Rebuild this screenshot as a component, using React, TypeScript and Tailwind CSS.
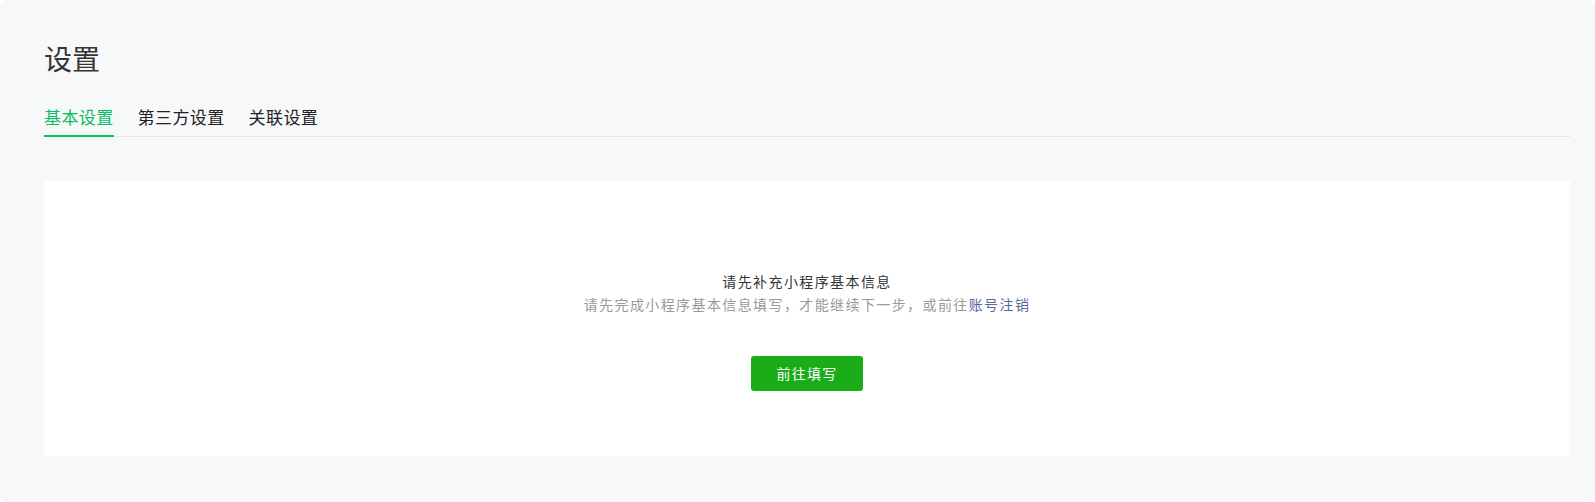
const tabs = ["基本设置", "第三方设置", "关联设置"]

const font = "font-['PingFang_SC','Noto_Sans_CJK_SC',sans-serif]"

export default function App() {
  return (
    <div className={`h-[502px] w-full bg-white ${font}`}>
      <div className="h-full rounded-lg bg-[#f7f8fa] pl-[44px] pr-[25px] pt-[38px]">
        <h1 className="text-[28px] leading-[40px] font-normal text-[#353535]">设置</h1>

        <div className="mt-[27px] flex gap-[24px] border-b border-[#e4e5e9]">
          {tabs.map((tab, i) => (
            <div
              key={tab}
              className={`-mb-px border-b-2 pb-[6px] text-[17px] leading-[24px] tracking-[0.4px] ${
                i === 0 ? "border-[#07c160] text-[#07c160]" : "border-transparent text-[#222]"
              }`}
            >
              {tab}
            </div>
          ))}
        </div>

        <div className="mt-[44px] flex h-[275px] flex-col items-center bg-white pt-[89px]">
          <p className="text-[14px] leading-[23px] tracking-[1.4px] text-[#353535]">请先补充小程序基本信息</p>
          <p className="text-[14px] leading-[23px] tracking-[1.4px] text-[#9a9a9a]">
            请先完成小程序基本信息填写，才能继续下一步，或前往
            <a href="#" className="text-[#576b95]">账号注销</a>
          </p>
          <button className="mt-[40px] h-[35px] w-[112px] rounded-[3px] bg-[#1aad19] text-[14px] tracking-[1.2px] text-white">
            前往填写
          </button>
        </div>
      </div>
    </div>
  )
}
